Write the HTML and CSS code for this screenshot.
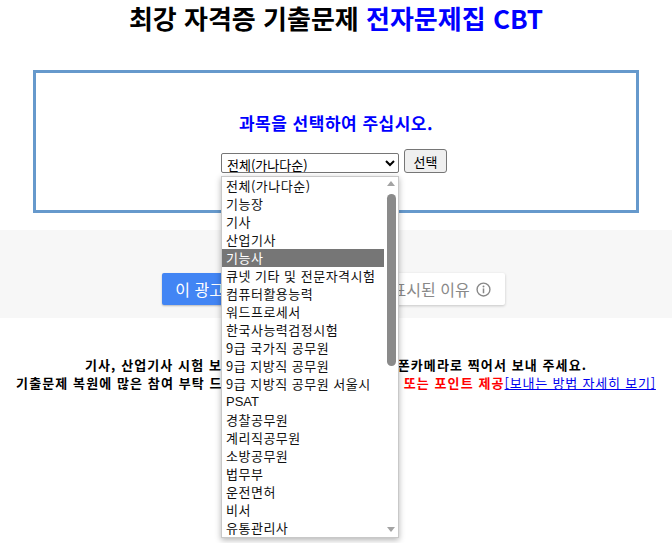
FILE: index.html
```html
<!DOCTYPE html>
<html lang="ko">
<head>
    <meta charset="UTF-8">
    <title>최강 자격증 기출문제 전자문제집 CBT</title>
    <link rel="stylesheet" href="styles.css">
</head>
<body>
    <h1 class="site-title">최강 자격증 기출문제 <span class="title-blue">전자문제집 CBT</span></h1>

    <div class="select-box">
        <p class="select-prompt">과목을 선택하여 주십시오.</p>

        <form class="select-row">
            <div class="select-wrap">
                <select class="subject-select">
                    <option>전체(가나다순)</option>
                </select>

                <!-- opened option list -->
                <div class="option-list">
                    <ul class="option-items">
                        <li>전체(가나다순)</li>
                        <li>기능장</li>
                        <li>기사</li>
                        <li>산업기사</li>
                        <li class="active">기능사</li>
                        <li>큐넷 기타 및 전문자격시험</li>
                        <li>컴퓨터활용능력</li>
                        <li>워드프로세서</li>
                        <li>한국사능력검정시험</li>
                        <li>9급 국가직 공무원</li>
                        <li>9급 지방직 공무원</li>
                        <li>9급 지방직 공무원 서울시</li>
                        <li class="latin">PSAT</li>
                        <li>경찰공무원</li>
                        <li>계리직공무원</li>
                        <li>소방공무원</li>
                        <li>법무부</li>
                        <li>운전면허</li>
                        <li>비서</li>
                        <li>유통관리사</li>
                    </ul>
                    <div class="list-scroll">
                        <span class="arrow-up"></span>
                        <span class="scroll-thumb"></span>
                        <span class="arrow-down"></span>
                    </div>
                </div>
            </div>
            <button type="button" class="select-btn">선택</button>
        </form>
    </div>

    <div class="ad-band">
        <button class="ad-btn ad-btn-blue">이 광고 그만 보기</button>
        <button class="ad-btn ad-btn-white">이 광고가 표시된 이유
            <svg class="info-icon" width="15" height="15" viewBox="0 0 14 14">
                <circle cx="7" cy="7" r="6" fill="none" stroke="#888" stroke-width="1.3"/>
                <circle cx="7" cy="4.2" r="0.9" fill="#888"/>
                <rect x="6.3" y="6" width="1.4" height="4.5" fill="#888"/>
            </svg>
        </button>
    </div>

    <div class="notice">
        <p>기사, 산업기사 시험 보신 분은 시험 문제지를 스마트폰카메라로 찍어서 보내 주세요.</p>
        <p>기출문제 복원에 많은 참여 부탁 드립니다. 참여하신 분께는 쿠폰 <span class="notice-red">또는 포인트 제공</span><a href="#" class="notice-link">[보내는 방법 자세히 보기]</a></p>
    </div>
</body>
</html>
```

FILE: styles.css
```css
* {
    box-sizing: border-box;
}

body {
    margin: 0;
    padding: 0 8px;
    min-height: 100vh;
    font-family: "Noto Sans CJK KR", "Liberation Sans", sans-serif;
    color: #000;
    background: #fff;
}

.site-title {
    margin: 0;
    text-align: center;
    font-size: 26px;
    font-weight: 700;
    line-height: 36px;
}

.title-blue {
    color: #0000ff;
}

.select-box {
    width: 606px;
    height: 143px;
    margin: 34px auto 0;
    border: 3px solid #6699cc;
    text-align: center;
}

.select-prompt {
    margin: 40px 0 0;
    font-size: 17px;
    font-weight: 700;
    line-height: 20px;
    letter-spacing: 0.5px;
    color: #0000ff;
}

.select-row {
    display: flex;
    justify-content: center;
    align-items: flex-end;
    gap: 5px;
    margin-top: 16px;
    margin-left: -4px;
}

.select-wrap {
    position: relative;
}

.subject-select {
    display: block;
    width: 178px;
    height: 20px;
    padding: 0 1px;
    font-family: "Noto Sans CJK KR", sans-serif;
    font-size: 13px;
    color: #000;
    background: #fff;
    border: 1px solid #767676;
    border-radius: 2px;
}

.select-btn {
    width: 43px;
    height: 24px;
    padding: 0;
    font-family: "Noto Sans CJK KR", sans-serif;
    font-size: 13px;
    color: #000;
    background: #efefef;
    border: 1px solid #767676;
    border-radius: 3px;
}

.option-list {
    position: absolute;
    top: 23px;
    left: 0;
    z-index: 10;
    display: flex;
    width: 178px;
    background: #fff;
    border: 1px solid #c8c8c8;
    box-shadow: 0 2px 6px rgba(0, 0, 0, 0.3);
    text-align: left;
}

.option-items {
    flex: 1;
    margin: 0;
    padding: 0;
    list-style: none;
}

.option-items li {
    height: 18px;
    padding-left: 4px;
    font-size: 13px;
    line-height: 18px;
    letter-spacing: 0.5px;
    color: #111;
    white-space: nowrap;
}

.option-items li.latin {
    font-family: "Liberation Sans", sans-serif;
    letter-spacing: 0;
}

.option-items li.active {
    background: #767676;
    color: #fff;
}

.list-scroll {
    width: 14px;
    display: flex;
    flex-direction: column;
    align-items: center;
}

.arrow-up,
.arrow-down {
    width: 0;
    height: 0;
    border-left: 4px solid transparent;
    border-right: 4px solid transparent;
}

.arrow-up {
    margin-top: 4px;
    border-bottom: 5px solid #a3a3a3;
}

.arrow-down {
    margin-top: auto;
    margin-bottom: 5px;
    border-top: 5px solid #a3a3a3;
}

.scroll-thumb {
    width: 9px;
    height: 172px;
    margin-top: 8px;
    background: #8a8a8a;
    border-radius: 5px;
}

.ad-band {
    display: flex;
    justify-content: center;
    gap: 8px;
    height: 88px;
    margin: 17px -8px 0;
    padding: 43px 5px 0 0;
    background: #f7f7f7;
}

.ad-btn {
    height: 32px;
    padding: 0 10px;
    font-family: "Noto Sans CJK KR", sans-serif;
    font-size: 16px;
    border-radius: 2px;
    display: flex;
    align-items: center;
    gap: 6px;
}

.ad-btn-blue {
    padding: 0 12px 0 13px;
    color: #fff;
    background: #4285f4;
    border: none;
    box-shadow: 0 1px 2px rgba(0, 0, 0, 0.25);
}

.ad-btn-white {
    padding: 0 14px 0 12px;
    color: #888;
    background: #fff;
    border: none;
    box-shadow: 0 1px 3px rgba(0, 0, 0, 0.2);
}

.notice {
    margin-top: 38px;
    text-align: center;
    font-size: 13px;
    font-weight: 700;
    line-height: 18px;
    letter-spacing: 1.1px;
}

.notice p {
    margin: 0;
    white-space: nowrap;
}

.notice-red {
    color: #ff0000;
}

.notice-link {
    color: #0000ee;
    font-weight: 400;
    letter-spacing: 0.8px;
    text-decoration: underline;
}
```
